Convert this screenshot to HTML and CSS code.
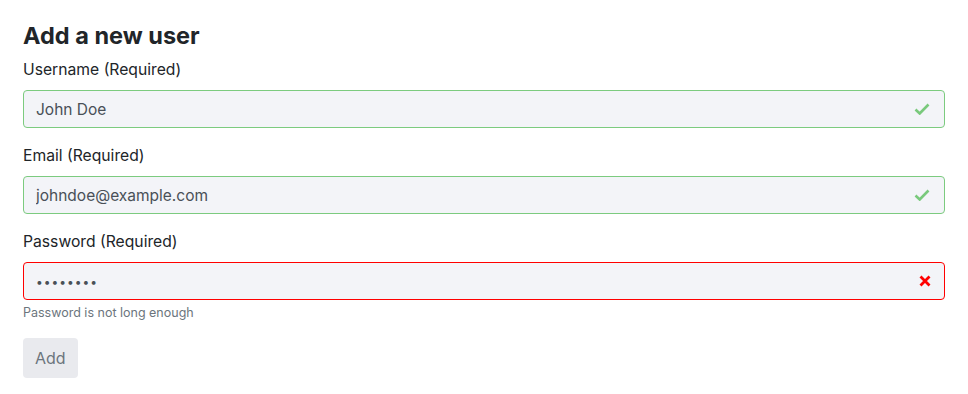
FILE: index.html
```html
<!DOCTYPE html>
<html lang="en">
<head>
    <meta charset="UTF-8">
    <title>Add a new user</title>
    <link rel="stylesheet" href="styles.css">
</head>
<body>
    <form class="user-form">
        <h1>Add a new user</h1>

        <div class="form-group">
            <label for="username">Username (Required)</label>
            <div class="field is-valid">
                <input type="text" id="username" value="John Doe">
                <svg class="field-icon" viewBox="0 0 16 12" width="16" height="12">
                    <path d="M1.5 6.5l4.2 4 8.8-9" fill="none" stroke="#79c97c" stroke-width="2.6"/>
                </svg>
            </div>
        </div>

        <div class="form-group">
            <label for="email">Email (Required)</label>
            <div class="field is-valid">
                <input type="email" id="email" value="johndoe@example.com">
                <svg class="field-icon" viewBox="0 0 16 12" width="16" height="12">
                    <path d="M1.5 6.5l4.2 4 8.8-9" fill="none" stroke="#79c97c" stroke-width="2.6"/>
                </svg>
            </div>
        </div>

        <div class="form-group">
            <label for="password">Password (Required)</label>
            <div class="field is-invalid">
                <input type="password" id="password" value="password">
                <svg class="field-icon icon-x" viewBox="0 0 12 12" width="12" height="12">
                    <path d="M1.5 1.5l9 9M10.5 1.5l-9 9" fill="none" stroke="#f00" stroke-width="2.8"/>
                </svg>
            </div>
            <small class="feedback">Password is not long enough</small>
        </div>

        <button type="button" class="btn" disabled>Add</button>
    </form>
</body>
</html>
```

FILE: styles.css
```css
body {
    margin: 0;
    padding: 21px 23px;
    font-family: Inter, "Noto Sans", sans-serif;
    color: #212529;
    background: #fff;
}

h1 {
    margin: 0 0 8px;
    font-size: 23.5px;
    line-height: 29px;
    font-weight: 700;
    color: #212529;
}

.form-group {
    margin-bottom: 16px;
}

label {
    display: block;
    margin-bottom: 8px;
    font-size: 15.7px;
    line-height: 24px;
}

.field {
    position: relative;
}

.field input {
    display: block;
    box-sizing: border-box;
    width: 100%;
    height: 38px;
    padding: 6px 40px 6px 12px;
    font-family: inherit;
    font-size: 15.5px;
    line-height: 24px;
    color: #495057;
    background: #f3f4f8;
    border: 1px solid #ced4da;
    border-radius: 4px;
    outline: none;
}

.is-valid input {
    border-color: #7ccb7f;
}

.is-invalid input {
    border-color: #f00;
}

.is-invalid input[type="password"] {
    letter-spacing: 1px;
    font-size: 12px;
}

.field-icon {
    position: absolute;
    right: 15px;
    top: 13px;
}

.icon-x {
    right: 14px;
}

.feedback {
    display: block;
    margin-top: 4px;
    font-size: 12.5px;
    line-height: 18px;
    color: #6c757d;
}

.btn {
    height: 40px;
    padding: 8px 12px;
    font-family: inherit;
    font-size: 16px;
    line-height: 24px;
    color: #6c757d;
    background: #e9eaee;
    border: none;
    border-radius: 4px;
}
```
